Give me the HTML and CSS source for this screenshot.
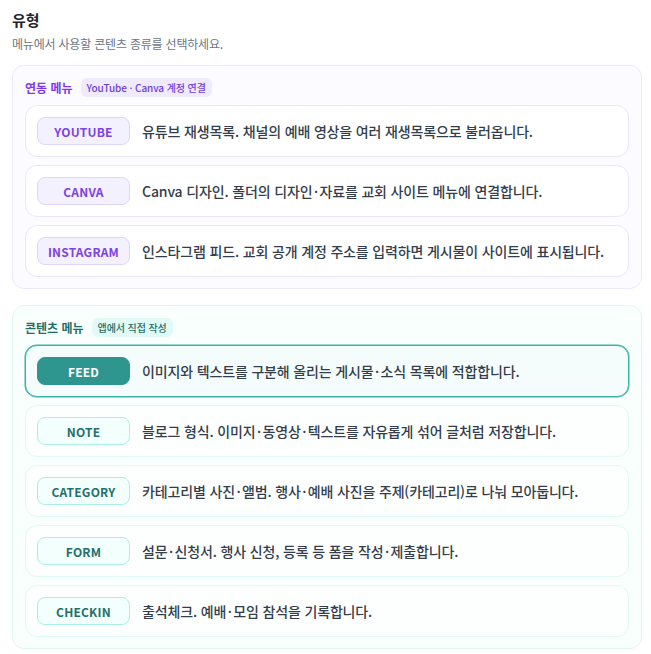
FILE: index.html
```html
<!DOCTYPE html>
<html lang="ko">
<head>
<meta charset="utf-8">
<link rel="stylesheet" href="styles.css">
</head>
<body>
<div class="page">
  <h2 class="title">유형</h2>
  <p class="subtitle">메뉴에서 사용할 콘텐츠 종류를 선택하세요.</p>

  <section class="group group-link">
    <div class="group-head">
      <span class="group-name">연동 메뉴</span>
      <span class="group-badge">YouTube · Canva 계정 연결</span>
    </div>
    <div class="card">
      <span class="tag">YOUTUBE</span>
      <span class="desc">유튜브 재생목록. 채널의 예배 영상을 여러 재생목록으로 불러옵니다.</span>
    </div>
    <div class="card">
      <span class="tag">CANVA</span>
      <span class="desc">Canva 디자인. 폴더의 디자인<span class="dot">·</span>자료를 교회 사이트 메뉴에 연결합니다.</span>
    </div>
    <div class="card">
      <span class="tag">INSTAGRAM</span>
      <span class="desc">인스타그램 피드. 교회 공개 계정 주소를 입력하면 게시물이 사이트에 표시됩니다.</span>
    </div>
  </section>

  <section class="group group-content">
    <div class="group-head">
      <span class="group-name">콘텐츠 메뉴</span>
      <span class="group-badge">앱에서 직접 작성</span>
    </div>
    <div class="card selected">
      <span class="tag">FEED</span>
      <span class="desc">이미지와 텍스트를 구분해 올리는 게시물<span class="dot">·</span>소식 목록에 적합합니다.</span>
    </div>
    <div class="card">
      <span class="tag">NOTE</span>
      <span class="desc">블로그 형식. 이미지<span class="dot">·</span>동영상<span class="dot">·</span>텍스트를 자유롭게 섞어 글처럼 저장합니다.</span>
    </div>
    <div class="card">
      <span class="tag">CATEGORY</span>
      <span class="desc">카테고리별 사진<span class="dot">·</span>앨범. 행사<span class="dot">·</span>예배 사진을 주제(카테고리)로 나눠 모아둡니다.</span>
    </div>
    <div class="card">
      <span class="tag">FORM</span>
      <span class="desc">설문<span class="dot">·</span>신청서. 행사 신청, 등록 등 폼을 작성<span class="dot">·</span>제출합니다.</span>
    </div>
    <div class="card">
      <span class="tag">CHECKIN</span>
      <span class="desc">출석체크. 예배<span class="dot">·</span>모임 참석을 기록합니다.</span>
    </div>
  </section>
</div>
</body>
</html>
```

FILE: styles.css
```css
* { box-sizing: border-box; }
html, body { margin: 0; padding: 0; background: #ffffff; }
body {
  font-family: "Noto Sans CJK KR", "Noto Sans", sans-serif;
  color: #333d4b;
}
.page {
  padding: 9px 9px 0 12px;
}
.title {
  margin: 0;
  font-size: 15px;
  line-height: 22px;
  font-weight: 700;
  color: #1e2530;
}
.subtitle {
  margin: 4px 0 12px;
  font-size: 12px;
  line-height: 18px;
  letter-spacing: -0.2px;
  color: #6b7684;
}
.group {
  display: flex;
  flex-direction: column;
  gap: 8px;
  padding: 12px 12px 11px;
  border-radius: 12px;
  border: 1px solid;
}
.group + .group { margin-top: 16px; }
.group-head {
  display: flex;
  align-items: center;
  gap: 8px;
  height: 19px;
}
.group-name {
  font-size: 12px;
  font-weight: 700;
}
.group-badge {
  font-size: 10px;
  font-weight: 500;
  line-height: 19px;
  letter-spacing: -0.1px;
  padding: 0 6px;
  border-radius: 6px;
}
.card {
  display: flex;
  align-items: center;
  gap: 12px;
  padding: 11px;
  border-radius: 12px;
  border: 1px solid;
  background: #ffffff;
}
.tag {
  flex: none;
  width: 93px;
  height: 28px;
  display: flex;
  align-items: center;
  justify-content: center;
  border-radius: 8px;
  border: 1px solid;
  font-size: 12px;
  font-weight: 700;
  letter-spacing: 0.2px;
}
.desc {
  font-size: 14px;
  font-weight: 500;
  letter-spacing: -0.15px;
  color: #333d4b;
  white-space: nowrap;
}
.dot { margin: 0 1.5px; }

/* linked group (purple) */
.group-link { background: #fcfbff; border-color: #ece9fb; }
.group-link .group-name { color: #7c3aed; }
.group-link .group-badge { background: #efeafd; color: #6d3fd8; }
.group-link .card { border-color: #e9e6fb; }
.group-link .tag { background: #f4f1ff; border-color: #ddd6fb; color: #7c44e0; }

/* content group (teal) */
.group-content { background: #f8fffd; border-color: #ddf8f2; }
.group-content .group-name { color: #1f6f69; }
.group-content .group-badge { background: #e2faf6; color: #1f6f69; }
.group-content .card { border-color: #e0f9f4; background: #fdfffe; }
.group-content .tag { background: #f3fffd; border-color: #a9efe3; color: #23706a; }
.group-content .card.selected { border-color: #3db3a7; background: #f4fdfb; box-shadow: 0 0 0 0.5px #3db3a7; }
.group-content .card.selected .tag { background: #2e968f; border-color: #2e968f; color: #ffffff; }
```
